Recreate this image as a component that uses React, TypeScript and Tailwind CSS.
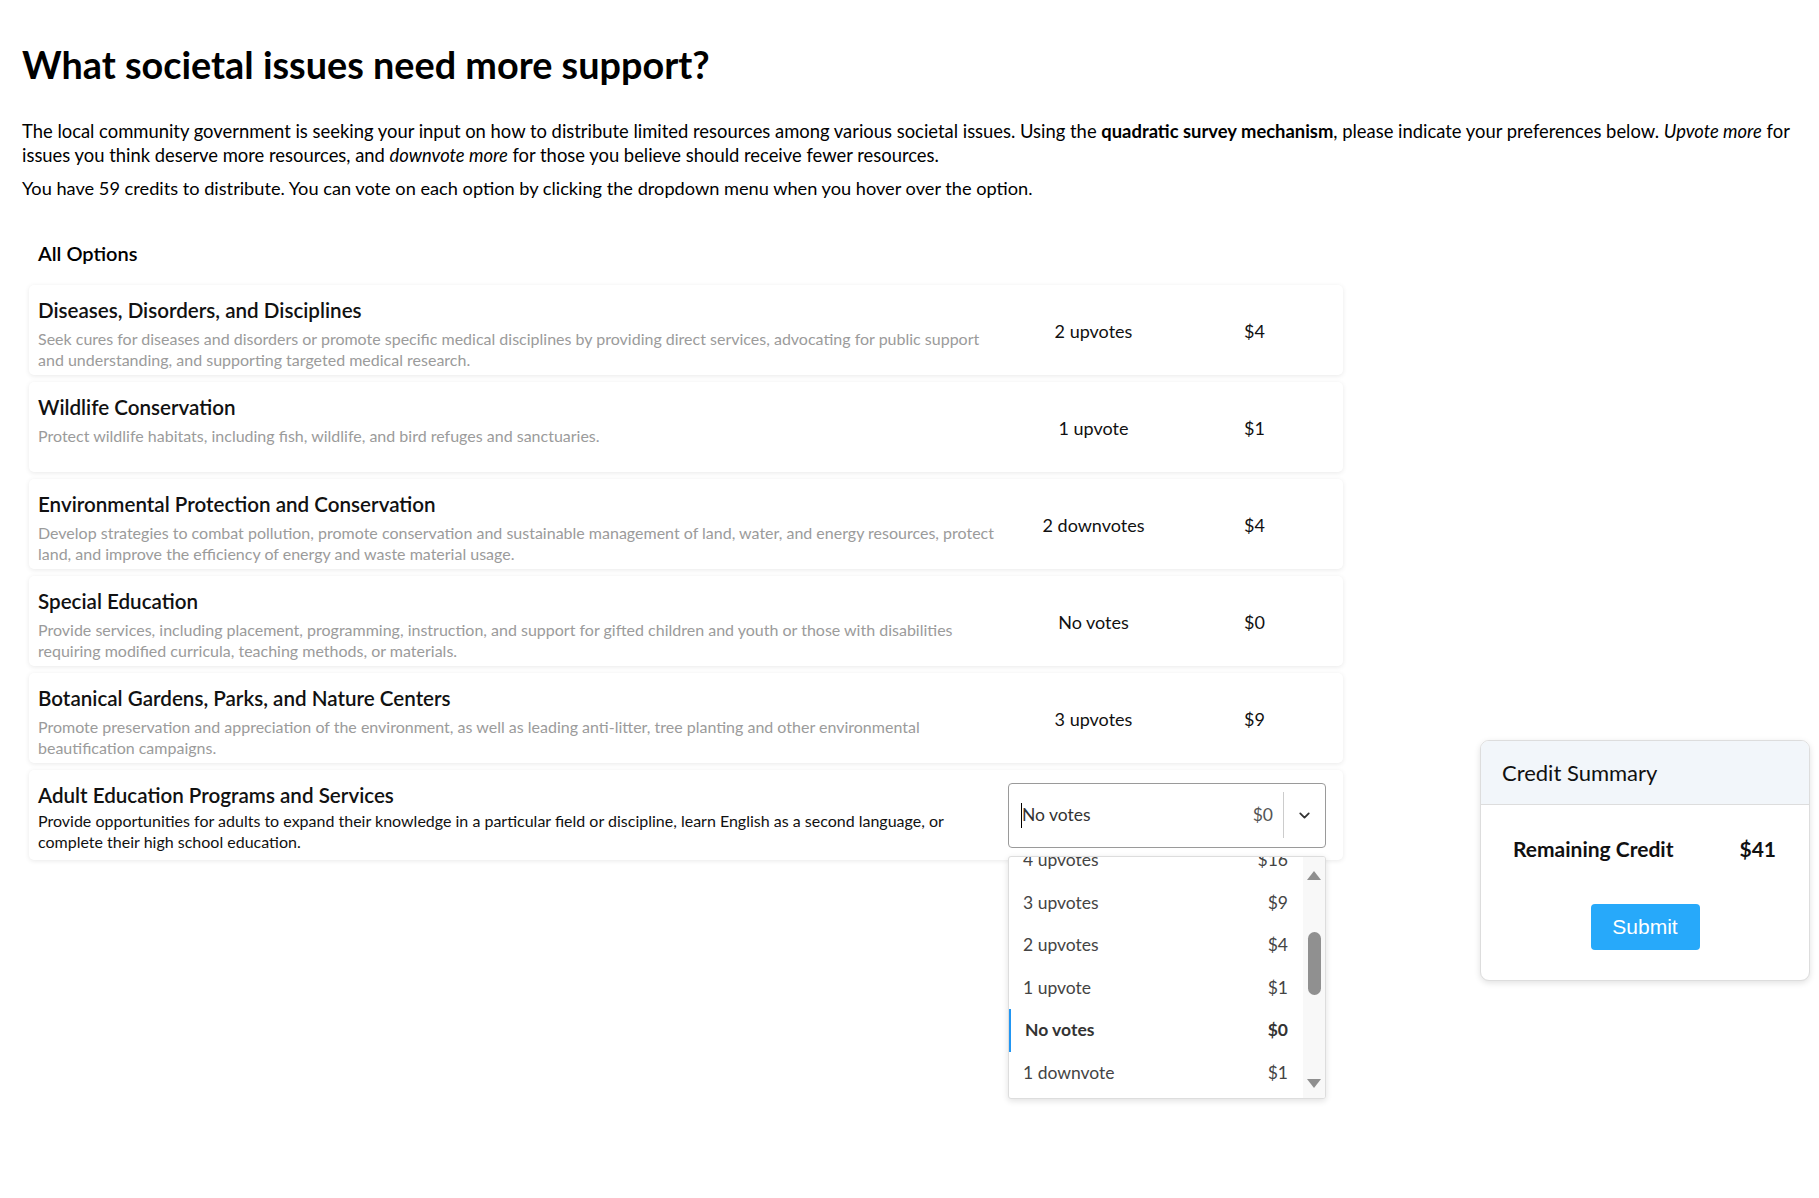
import { ChevronDown } from 'lucide-react';

type Option = { title: string; desc: string; votes: string; cost: string };

const options: Option[] = [
  {
    title: 'Diseases, Disorders, and Disciplines',
    desc: 'Seek cures for diseases and disorders or promote specific medical disciplines by providing direct services, advocating for public support and understanding, and supporting targeted medical research.',
    votes: '2 upvotes',
    cost: '$4',
  },
  {
    title: 'Wildlife Conservation',
    desc: 'Protect wildlife habitats, including fish, wildlife, and bird refuges and sanctuaries.',
    votes: '1 upvote',
    cost: '$1',
  },
  {
    title: 'Environmental Protection and Conservation',
    desc: 'Develop strategies to combat pollution, promote conservation and sustainable management of land, water, and energy resources, protect land, and improve the efficiency of energy and waste material usage.',
    votes: '2 downvotes',
    cost: '$4',
  },
  {
    title: 'Special Education',
    desc: 'Provide services, including placement, programming, instruction, and support for gifted children and youth or those with disabilities requiring modified curricula, teaching methods, or materials.',
    votes: 'No votes',
    cost: '$0',
  },
  {
    title: 'Botanical Gardens, Parks, and Nature Centers',
    desc: 'Promote preservation and appreciation of the environment, as well as leading anti-litter, tree planting and other environmental beautification campaigns.',
    votes: '3 upvotes',
    cost: '$9',
  },
];

const menuItems = [
  { label: '5 upvotes', cost: '$25' },
  { label: '4 upvotes', cost: '$16' },
  { label: '3 upvotes', cost: '$9' },
  { label: '2 upvotes', cost: '$4' },
  { label: '1 upvote', cost: '$1' },
  { label: 'No votes', cost: '$0', selected: true },
  { label: '1 downvote', cost: '$1' },
  { label: '2 downvotes', cost: '$4' },
];

function OptionCard({ option }: { option: Option }) {
  return (
    <div className="flex h-[90px] rounded-[5px] bg-white pl-[9px] pr-[17px] shadow-[0_1px_5px_rgba(0,0,0,0.09)]">
      <div className="flex-1 pr-[8px] pt-[11px]">
        <h3 className="text-[20.6px] font-semibold leading-[28px] text-[#111]">{option.title}</h3>
        <p className="mt-[4px] text-[16px] leading-[21px] text-[#9b9b9b]">{option.desc}</p>
      </div>
      <div className="flex w-[318px] shrink-0 items-center pt-[3px] text-[18px] text-[#111]">
        <span className="w-[171px] shrink-0 text-center">{option.votes}</span>
        <span className="w-[147px] shrink-0 pl-[4px] text-center">{option.cost}</span>
      </div>
    </div>
  );
}

function VoteDropdown() {
  return (
    <div className="relative w-[318px]">
      <div className="flex h-[65px] items-center rounded-[4px] border border-[#9a9a9a] bg-white pl-[12px]">
        <span className="h-[25px] w-px bg-black" />
        <span className="flex-1 text-[17.5px] text-[#333]">No votes</span>
        <span className="text-[17.5px] text-[#555]">$0</span>
        <span className="ml-[10px] h-[46px] w-px bg-[#ccc]" />
        <span className="flex w-[41px] justify-center text-[#333]">
          <ChevronDown size={17} strokeWidth={2.5} />
        </span>
      </div>
      <div className="absolute left-0 top-[73px] z-10 flex h-[243px] w-[318px] overflow-hidden rounded-[3px] border border-[#ddd] bg-white shadow-[0_2px_6px_rgba(0,0,0,0.12)]">
        <div className="flex-1 overflow-hidden">
          <div className="-mt-[60px]">
            {menuItems.map((item) =>
              item.selected ? (
                <div
                  key={item.label}
                  className="flex h-[42.5px] items-center border-l-2 border-[#2196f3] pl-[14px] pr-[15px] text-[17.5px] font-bold text-[#333]"
                >
                  <span className="flex-1">{item.label}</span>
                  <span>{item.cost}</span>
                </div>
              ) : (
                <div key={item.label} className="flex h-[42.5px] items-center pl-[14px] pr-[15px] text-[17.5px] text-[#444]">
                  <span className="flex-1">{item.label}</span>
                  <span>{item.cost}</span>
                </div>
              )
            )}
          </div>
        </div>
        <div className="flex w-[22px] flex-col items-center bg-[#f8f8f8] pt-[14px]">
          <svg width="14" height="9" viewBox="0 0 14 9">
            <path d="M7 0 L14 9 L0 9 Z" fill="#8f8f8f" />
          </svg>
          <div className="mt-[52px] h-[63px] w-[13px] rounded-full bg-[#909090]" />
          <div className="flex-1" />
          <svg width="14" height="9" viewBox="0 0 14 9" className="mb-[10px]">
            <path d="M0 0 L14 0 L7 9 Z" fill="#8f8f8f" />
          </svg>
        </div>
      </div>
    </div>
  );
}

export default function App() {
  return (
    <div className="min-h-screen bg-white pl-[22px] pr-[9px] pt-[41px] font-['Lato','Noto_Sans',sans-serif] text-black">
      <h1 className="text-[37.8px] font-bold leading-[48px]">What societal issues need more support?</h1>
      <p className="mt-[30px] text-[18.4px] leading-[24px]">
        The local community government is seeking your input on how to distribute limited resources among various
        societal issues. Using the <b>quadratic survey mechanism</b>, please indicate your preferences below.{' '}
        <i>Upvote more</i> for issues you think deserve more resources, and <i>downvote more</i> for those you believe
        should receive fewer resources.
      </p>
      <p className="mt-[9px] text-[18.2px] leading-[24px]">
        You have 59 credits to distribute. You can vote on each option by clicking the dropdown menu when you hover over
        the option.
      </p>

      <div className="mt-[39px] flex items-start justify-between">
        <section className="ml-[7px] w-[1314px]">
          <h2 className="pl-[9px] text-[20px] font-semibold leading-[28px]">All Options</h2>
          <div className="mt-[18px] flex flex-col gap-[7px]">
            {options.map((o) => (
              <OptionCard key={o.title} option={o} />
            ))}
            <div className="flex h-[90px] rounded-[5px] bg-white pl-[9px] pr-[17px] shadow-[0_1px_5px_rgba(0,0,0,0.09)]">
              <div className="flex-1 pr-[8px] pt-[11px]">
                <h3 className="text-[20.6px] font-semibold leading-[28px] text-[#111]">
                  Adult Education Programs and Services
                </h3>
                <p className="mt-[1px] text-[16px] leading-[21px] text-[#111]">
                  Provide opportunities for adults to expand their knowledge in a particular field or discipline, learn
                  English as a second language, or complete their high school education.
                </p>
              </div>
              <div className="flex items-center">
                <VoteDropdown />
              </div>
            </div>
          </div>
        </section>

        <aside className="mt-[501px] w-[330px] overflow-hidden rounded-[9px] border border-[#ddd] bg-white shadow-[0_2px_6px_rgba(0,0,0,0.12)]">
          <div className="flex h-[64px] items-center border-b border-[#ddd] bg-[#f2f6fa] pl-[21px]">
            <span className="text-[22px] text-[#111]">Credit Summary</span>
          </div>
          <div className="flex items-center justify-between pl-[32px] pr-[33px] pt-[28px]">
            <span className="text-[21px] font-bold text-[#111]">Remaining Credit</span>
            <span className="text-[21px] font-bold text-[#111]">$41</span>
          </div>
          <div className="flex justify-center pb-[30px] pt-[39px]">
            <button className="h-[46px] w-[109px] rounded-[4px] bg-[#27a9fa] font-['Liberation_Sans',sans-serif] text-[21px] text-white">
              Submit
            </button>
          </div>
        </aside>
      </div>
    </div>
  );
}
